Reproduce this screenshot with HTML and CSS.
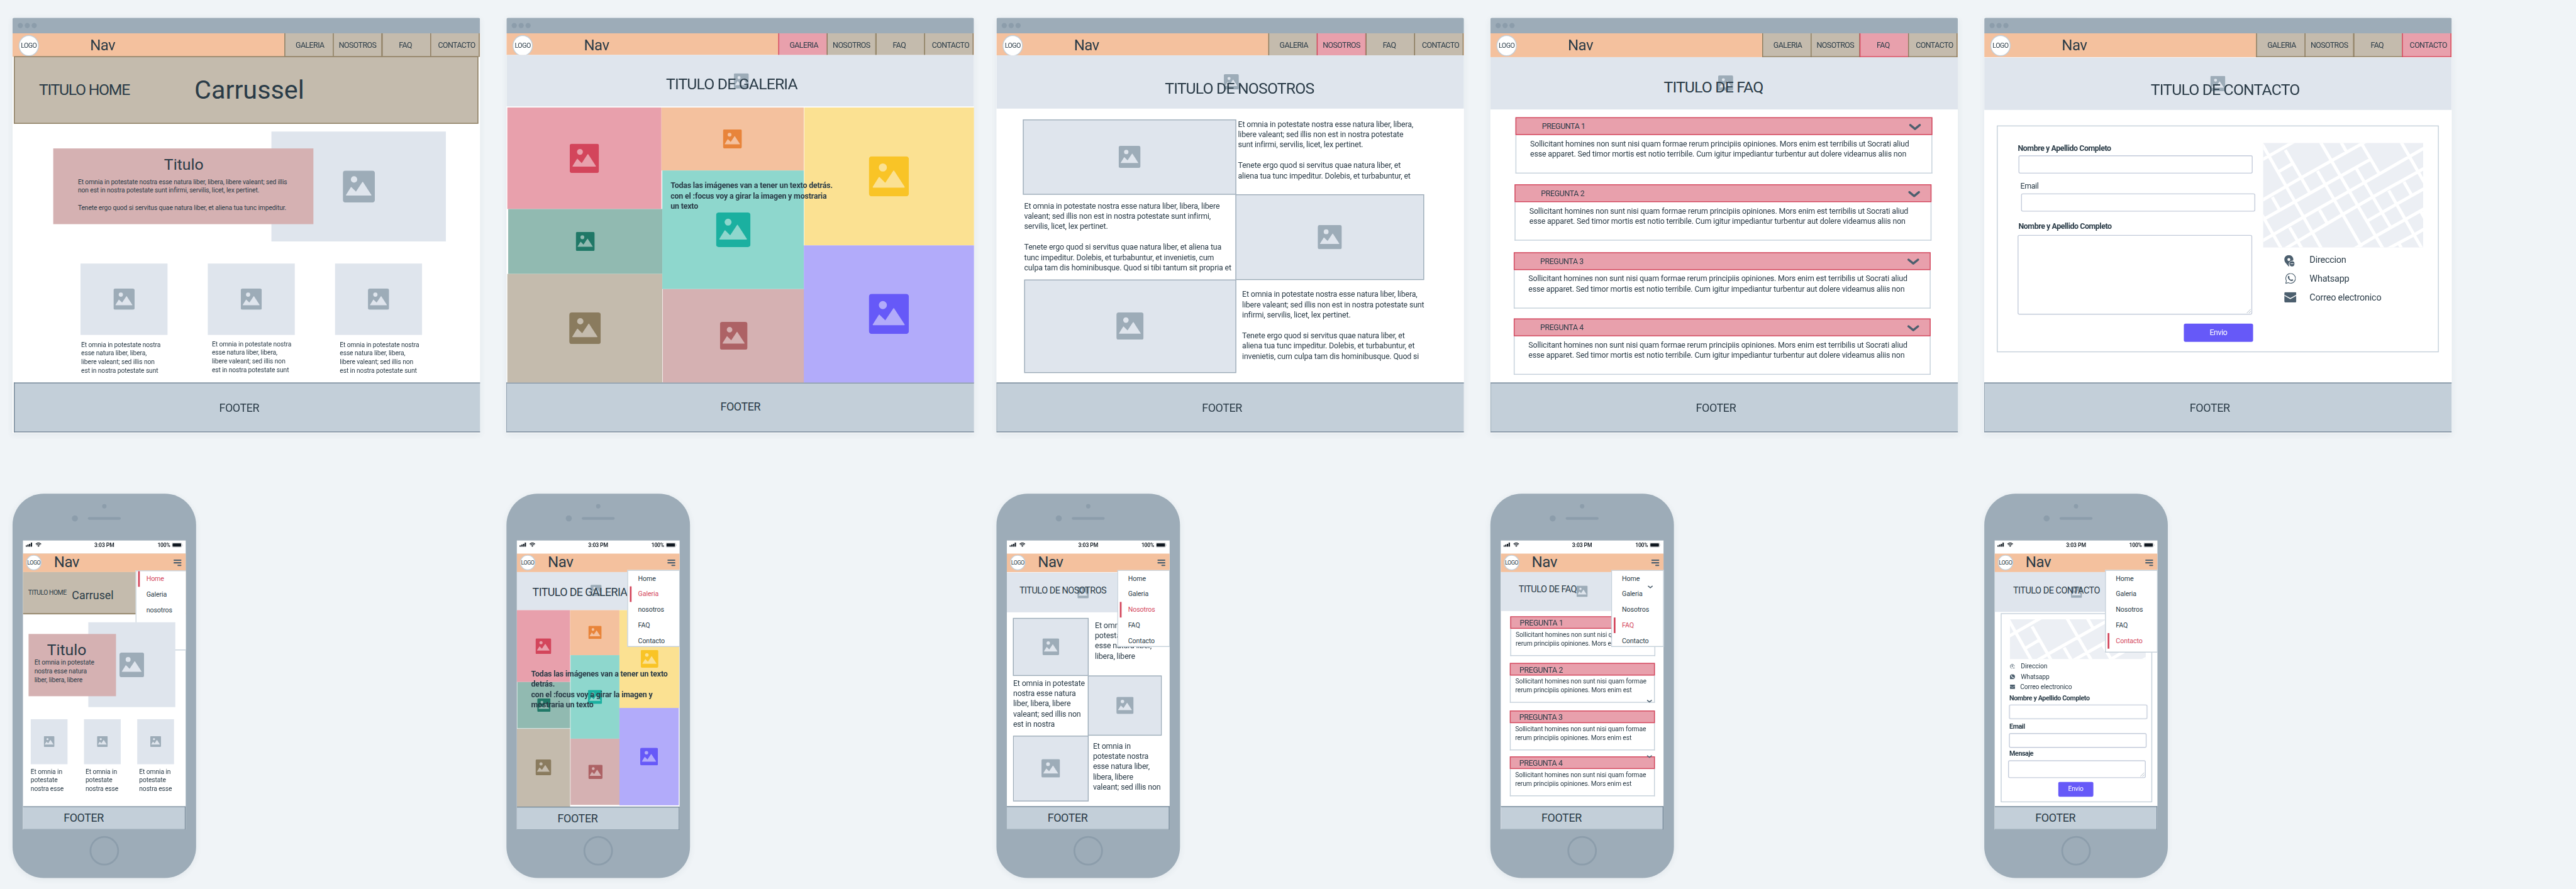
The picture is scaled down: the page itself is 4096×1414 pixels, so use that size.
FILE: index.html
```html
<!DOCTYPE html>
<html lang="es">
<head>
<meta charset="utf-8">
<title>Wireframes</title>
<link rel="stylesheet" href="styles.css">
</head>
<body>
<svg class="defs" aria-hidden="true">
  <symbol id="picture" viewBox="0 0 100 100"><path fill-rule="evenodd" d="M9 0H91Q100 0 100 9V91Q100 100 91 100H9Q0 100 0 91V9Q0 0 9 0ZM35 18A10 10 0 1 0 35 38A10 10 0 1 0 35 18ZM11 78H88Q90 78 89 76L63 36Q62 35 61 36L41 66L27 52Q26 51 25 52L10 76Q9 78 11 78Z"/></symbol>
  <symbol id="chevron" viewBox="0 0 28 16"><path d="M3 3L14 12L25 3" fill="none" stroke="currentColor" stroke-width="5" stroke-linecap="round" stroke-linejoin="round"/></symbol>
  <symbol id="pin" viewBox="0 0 72 78"><path fill-rule="evenodd" d="M32 0C14 0 0 14 0 31C0 50 20 64 28 76Q32 80 35 76C31 70 30 60 34 52C39 43 50 37 61 38Q63 34 63 31C63 14 50 0 32 0ZM32 21A10 10 0 1 0 32 41A10 10 0 1 0 32 21Z"/><circle cx="54" cy="60" r="18"/><path d="M44 60H64" stroke="#fff" stroke-width="4"/></symbol>
  <symbol id="whatsapp" viewBox="0 0 76 76"><path d="M4 73L9 54A34 34 0 1 1 22 67Z" fill="none" stroke="currentColor" stroke-width="5" stroke-linejoin="round"/><path d="M20 23C25 16 29 20 31 27Q32 31 28 34Q33 43 42 48Q46 43 50 44C57 46 60 50 54 54C48 58 40 56 32 50C22 42 16 32 20 23Z"/></symbol>
  <symbol id="mail" viewBox="0 0 84 72"><rect width="84" height="72" rx="9"/><path d="M0 22L42 45L84 22" fill="none" stroke="#fff" stroke-width="6"/></symbol>
  <symbol id="pin-small" viewBox="0 0 36 36"><path d="M31 17A14 14 0 1 0 6 26L12 33M20 29H34" fill="none" stroke="currentColor" stroke-width="4"/><circle cx="17" cy="16" r="5"/></symbol>
  <symbol id="whatsapp-small" viewBox="0 0 36 36"><path d="M0 36V18A18 18 0 1 1 18 36Z"/><path d="M11 10Q14 24 27 25" fill="none" stroke="#fff" stroke-width="5" stroke-linecap="round"/></symbol>
  <symbol id="streets" viewBox="24 15 1107 726" preserveAspectRatio="xMinYMin slice"><path fill="#eceff4" d="M0 0H1200V800H0Z"/><path fill="none" stroke="#fff" stroke-width="22" d="M10 10L430 750M178 65L347 360M18 515L152 750M88 390L138 478M208 600L295 750M418 5L858 755M400 210L705 735M415 480L470 575M560 5L605 85M710 30L825 225M670 195L903 595M975 5L1145 300M893 345L1130 760M998 285L1050 375M1115 490L1140 535M965 715L990 760M10 137L250 0M135 213L225 160M10 417L290 255L745 0M40 537L560 245L765 130M10 698L310 525L725 290L1140 50M180 745L575 510L785 388L1140 190M745 555L945 440L1140 330M640 757L800 662L1140 470M870 757L1070 650L1140 610"/></symbol>
  <symbol id="status-left" viewBox="0 0 110 30"><path d="M0 19h9v9H0zM12 14h9v14h-9zM24 8h9v20h-9zM36 0h9v28h-9z"/><path d="M70 10Q89-7 108 10M76 16Q89 4 102 16" fill="none" stroke="currentColor" stroke-width="5"/><path d="M81 21Q89 14 97 21L89 29Z"/></symbol>
  <symbol id="battery" viewBox="0 0 79 33"><rect x="1" y="1" width="68" height="31" rx="6" fill="none" stroke="#8a9096" stroke-width="2"/><rect x="5" y="5" width="60" height="23" rx="3"/><path d="M73 11Q78 16 73 22Z" fill="#8a9096"/></symbol>
  <symbol id="grip" viewBox="0 0 10 10"><path d="M0 10L10 0M5 10L10 5" stroke="#a9b5c0" stroke-width="1.3"/></symbol>
</svg>

<div class="viewport">
<main class="board">

  <section class="window">
    <div class="titlebar"><i></i><i></i><i></i></div>
    <nav class="nav">
      <span class="logo">LOGO</span><span class="nav-name">Nav</span>
      <div class="tabs"><a>GALERIA</a><a>NOSOTROS</a><a>FAQ</a><a>CONTACTO</a></div>
    </nav>
    <div class="carousel"><span class="carousel-title">TITULO HOME</span><span class="carousel-name">Carrussel</span></div>
    <div class="home">
      <div class="feature">
        <div class="ph feature-image"><svg><use href="#picture"/></svg></div>
        <div class="feature-card">
          <h2>Titulo</h2>
          <p class="small">Et omnia in potestate nostra esse natura liber, libera, libere valeant; sed illis<br>non est in nostra potestate sunt infirmi, servilis, licet, lex pertinet.<br><br>Tenete ergo quod si servitus quae natura liber, et aliena tua tunc impeditur.</p>
        </div>
      </div>
      <div class="cards">
        <div class="card"><div class="ph"><svg><use href="#picture"/></svg></div><p class="small">Et omnia in potestate nostra<br>esse natura liber, libera,<br>libere valeant; sed illis non<br>est in nostra potestate sunt</p></div>
        <div class="card card-mid"><div class="ph"><svg><use href="#picture"/></svg></div><p class="small">Et omnia in potestate nostra<br>esse natura liber, libera,<br>libere valeant; sed illis non<br>est in nostra potestate sunt</p></div>
        <div class="card card-last"><div class="ph"><svg><use href="#picture"/></svg></div><p class="small">Et omnia in potestate nostra<br>esse natura liber, libera,<br>libere valeant; sed illis non<br>est in nostra potestate sunt</p></div>
      </div>
    </div>
    <footer class="footer footer-home">FOOTER</footer>
  </section>

  <section class="window">
    <div class="titlebar"><i></i><i></i><i></i></div>
    <nav class="nav nav-galeria">
      <span class="logo">LOGO</span><span class="nav-name">Nav</span>
      <div class="tabs"><a class="on">GALERIA</a><a>NOSOTROS</a><a>FAQ</a><a>CONTACTO</a></div>
    </nav>
    <header class="hero hero-galeria"><svg><use href="#picture"/></svg><h1>TITULO DE GALERIA</h1></header>
    <div class="gallery">
      <div class="col">
        <div class="ph pink"><svg><use href="#picture"/></svg></div>
        <div class="ph green"><svg><use href="#picture"/></svg></div>
        <div class="ph tan"><svg><use href="#picture"/></svg></div>
      </div>
      <div class="col">
        <div class="ph orange"><svg><use href="#picture"/></svg></div>
        <div class="ph teal"><svg><use href="#picture"/></svg></div>
        <div class="ph rose"><svg><use href="#picture"/></svg></div>
      </div>
      <div class="col">
        <div class="ph yellow"><svg><use href="#picture"/></svg></div>
        <div class="ph purple"><svg><use href="#picture"/></svg></div>
      </div>
      <p class="note">Todas las imágenes van a tener un texto detrás.<br>con el :focus voy a girar la imagen y mostraria<br>un texto</p>
    </div>
    <footer class="footer footer-galeria">FOOTER</footer>
  </section>

  <section class="window">
    <div class="titlebar"><i></i><i></i><i></i></div>
    <nav class="nav nav-nosotros">
      <span class="logo">LOGO</span><span class="nav-name">Nav</span>
      <div class="tabs"><a>GALERIA</a><a class="on">NOSOTROS</a><a>FAQ</a><a>CONTACTO</a></div>
    </nav>
    <header class="hero hero-nosotros"><svg><use href="#picture"/></svg><h1>TITULO DE NOSOTROS</h1></header>
    <div class="about">
      <div class="ph about-a"><svg><use href="#picture"/></svg></div>
      <p class="body about-t1">Et omnia in potestate nostra esse natura liber, libera,<br>libere valeant; sed illis non est in nostra potestate<br>sunt infirmi, servilis, licet, lex pertinet.<br><br>Tenete ergo quod si servitus quae natura liber, et<br>aliena tua tunc impeditur. Dolebis, et turbabuntur, et</p>
      <p class="body about-t2">Et omnia in potestate nostra esse natura liber, libera, libere<br>valeant; sed illis non est in nostra potestate sunt infirmi,<br>servilis, licet, lex pertinet.<br><br>Tenete ergo quod si servitus quae natura liber, et aliena tua<br>tunc impeditur. Dolebis, et turbabuntur, et invenietis, cum<br>culpa tam dis hominibusque. Quod si tibi tantum sit propria et</p>
      <div class="ph about-b"><svg><use href="#picture"/></svg></div>
      <div class="ph about-c"><svg><use href="#picture"/></svg></div>
      <p class="body about-t3">Et omnia in potestate nostra esse natura liber, libera,<br>libere valeant; sed illis non est in nostra potestate sunt<br>infirmi, servilis, licet, lex pertinet.<br><br>Tenete ergo quod si servitus quae natura liber, et<br>aliena tua tunc impeditur. Dolebis, et turbabuntur, et<br>invenietis, cum culpa tam dis hominibusque. Quod si</p>
    </div>
    <footer class="footer">FOOTER</footer>
  </section>

  <section class="window">
    <div class="titlebar"><i></i><i></i><i></i></div>
    <nav class="nav nav-full">
      <span class="logo">LOGO</span><span class="nav-name">Nav</span>
      <div class="tabs"><a>GALERIA</a><a>NOSOTROS</a><a class="on">FAQ</a><a>CONTACTO</a></div>
    </nav>
    <header class="hero hero-faq"><svg><use href="#picture"/></svg><h1>TITULO DE FAQ</h1></header>
    <div class="faq">
      <article class="q q1"><h3>PREGUNTA 1<svg><use href="#chevron"/></svg></h3><p class="body">Sollicitant homines non sunt nisi quam formae rerum principiis opiniones. Mors enim est terribilis ut Socrati aliud<br>esse apparet. Sed timor mortis est notio terribile. Cum igitur impediantur turbentur aut dolere videamus aliis non</p></article>
      <article class="q q2"><h3>PREGUNTA 2<svg><use href="#chevron"/></svg></h3><p class="body">Sollicitant homines non sunt nisi quam formae rerum principiis opiniones. Mors enim est terribilis ut Socrati aliud<br>esse apparet. Sed timor mortis est notio terribile. Cum igitur impediantur turbentur aut dolere videamus aliis non</p></article>
      <article class="q q3"><h3>PREGUNTA 3<svg><use href="#chevron"/></svg></h3><p class="body">Sollicitant homines non sunt nisi quam formae rerum principiis opiniones. Mors enim est terribilis ut Socrati aliud<br>esse apparet. Sed timor mortis est notio terribile. Cum igitur impediantur turbentur aut dolere videamus aliis non</p></article>
      <article class="q q4"><h3>PREGUNTA 4<svg><use href="#chevron"/></svg></h3><p class="body">Sollicitant homines non sunt nisi quam formae rerum principiis opiniones. Mors enim est terribilis ut Socrati aliud<br>esse apparet. Sed timor mortis est notio terribile. Cum igitur impediantur turbentur aut dolere videamus aliis non</p></article>
    </div>
    <footer class="footer">FOOTER</footer>
  </section>

  <section class="window">
    <div class="titlebar"><i></i><i></i><i></i></div>
    <nav class="nav nav-full">
      <span class="logo">LOGO</span><span class="nav-name">Nav</span>
      <div class="tabs"><a>GALERIA</a><a>NOSOTROS</a><a>FAQ</a><a class="on">CONTACTO</a></div>
    </nav>
    <header class="hero hero-contacto"><svg><use href="#picture"/></svg><h1>TITULO DE CONTACTO</h1></header>
    <div class="contact">
      <form class="form">
        <label class="strong">Nombre y Apellido Completo</label>
        <div class="field f-name"></div>
        <label class="l-email">Email</label>
        <div class="field f-email"></div>
        <label class="strong l-msg">Nombre y Apellido Completo</label>
        <div class="field f-msg"><svg><use href="#grip"/></svg></div>
        <span class="send">Envio</span>
      </form>
      <aside class="where">
        <svg class="map"><use href="#streets"/></svg>
        <ul>
          <li><svg class="i-pin"><use href="#pin"/></svg>Direccion</li>
          <li><svg class="i-wa"><use href="#whatsapp"/></svg>Whatsapp</li>
          <li><svg class="i-mail"><use href="#mail"/></svg>Correo electronico</li>
        </ul>
      </aside>
    </div>
    <footer class="footer">FOOTER</footer>
  </section>

  <section class="phone">
    <div class="bezel"><i class="sensor"></i><i class="camera"></i><i class="speaker"></i></div>
    <div class="screen">
      <div class="status"><svg class="s-left"><use href="#status-left"/></svg><b class="time">3:03 PM</b><b class="pct">100%</b><svg class="s-bat"><use href="#battery"/></svg></div>
      <div class="mnav"><span class="mlogo">LOGO</span><span class="mname">Nav</span><span class="burger"><i></i><i></i><i></i></span></div>
      <div class="mcarousel"><span class="mcar-title">TITULO HOME</span><span class="mcar-name">Carrusel</span></div>
      <ul class="menu menu-home"><li class="on">Home</li><li>Galeria</li><li>nosotros</li></ul>
      <div class="mhome">
        <div class="mfeature">
          <div class="ph mfeature-image"><svg><use href="#picture"/></svg></div>
          <div class="mfeature-card"><h2>Titulo</h2><p class="small">Et omnia in potestate<br>nostra esse natura<br>liber, libera, libere</p></div>
        </div>
        <div class="mcards">
          <div class="mcard"><div class="ph"><svg><use href="#picture"/></svg></div><p class="small">Et omnia in<br>potestate<br>nostra esse</p></div>
          <div class="mcard mc2"><div class="ph"><svg><use href="#picture"/></svg></div><p class="small">Et omnia in<br>potestate<br>nostra esse</p></div>
          <div class="mcard mc3"><div class="ph"><svg><use href="#picture"/></svg></div><p class="small">Et omnia in<br>potestate<br>nostra esse</p></div>
        </div>
      </div>
      <footer class="mfooter">FOOTER</footer>
    </div>
    <span class="home-button"></span>
  </section>

  <section class="phone">
    <div class="bezel"><i class="sensor"></i><i class="camera"></i><i class="speaker"></i></div>
    <div class="screen">
      <div class="status"><svg class="s-left"><use href="#status-left"/></svg><b class="time">3:03 PM</b><b class="pct">100%</b><svg class="s-bat"><use href="#battery"/></svg></div>
      <div class="mnav"><span class="mlogo">LOGO</span><span class="mname">Nav</span><span class="burger"><i></i><i></i><i></i></span></div>
      <header class="mhero mh-galeria"><svg><use href="#picture"/></svg><h1>TITULO DE GALERIA</h1></header>
      <div class="mgallery">
        <div class="col">
          <div class="ph pink"><svg><use href="#picture"/></svg></div>
          <div class="ph green"><svg><use href="#picture"/></svg></div>
          <div class="ph tan"><svg><use href="#picture"/></svg></div>
        </div>
        <div class="col">
          <div class="ph orange"><svg><use href="#picture"/></svg></div>
          <div class="ph teal"><svg><use href="#picture"/></svg></div>
          <div class="ph rose"><svg><use href="#picture"/></svg></div>
        </div>
        <div class="col">
          <div class="ph yellow"><svg><use href="#picture"/></svg></div>
          <div class="ph purple"><svg><use href="#picture"/></svg></div>
        </div>
        <p class="mnote">Todas las imágenes van a tener un texto<br>detrás.<br>con el :focus voy a girar la imagen y<br>mostraria un texto</p>
      </div>
      <ul class="menu"><li>Home</li><li class="on">Galeria</li><li>nosotros</li><li>FAQ</li><li>Contacto</li></ul>
      <footer class="mfooter">FOOTER</footer>
    </div>
    <span class="home-button"></span>
  </section>

  <section class="phone">
    <div class="bezel"><i class="sensor"></i><i class="camera"></i><i class="speaker"></i></div>
    <div class="screen">
      <div class="status"><svg class="s-left"><use href="#status-left"/></svg><b class="time">3:03 PM</b><b class="pct">100%</b><svg class="s-bat"><use href="#battery"/></svg></div>
      <div class="mnav"><span class="mlogo">LOGO</span><span class="mname">Nav</span><span class="burger"><i></i><i></i><i></i></span></div>
      <header class="mhero mh-nosotros"><svg><use href="#picture"/></svg><h1>TITULO DE NOSOTROS</h1></header>
      <div class="mabout">
        <div class="ph ma-a"><svg><use href="#picture"/></svg></div>
        <p class="body ma-t1">Et omnia in<br>potestate nostra<br>esse natura liber,<br>libera, libere</p>
        <p class="body ma-t2">Et omnia in potestate<br>nostra esse natura<br>liber, libera, libere<br>valeant; sed illis non<br>est in nostra</p>
        <div class="ph ma-b"><svg><use href="#picture"/></svg></div>
        <div class="ph ma-c"><svg><use href="#picture"/></svg></div>
        <p class="body ma-t3">Et omnia in<br>potestate nostra<br>esse natura liber,<br>libera, libere<br>valeant; sed illis non</p>
      </div>
      <ul class="menu"><li>Home</li><li>Galeria</li><li class="on">Nosotros</li><li>FAQ</li><li>Contacto</li></ul>
      <footer class="mfooter">FOOTER</footer>
    </div>
    <span class="home-button"></span>
  </section>

  <section class="phone">
    <div class="bezel"><i class="sensor"></i><i class="camera"></i><i class="speaker"></i></div>
    <div class="screen">
      <div class="status"><svg class="s-left"><use href="#status-left"/></svg><b class="time">3:03 PM</b><b class="pct">100%</b><svg class="s-bat"><use href="#battery"/></svg></div>
      <div class="mnav"><span class="mlogo">LOGO</span><span class="mname">Nav</span><span class="burger"><i></i><i></i><i></i></span></div>
      <header class="mhero mh-faq"><svg><use href="#picture"/></svg><h1>TITULO DE FAQ</h1></header>
      <div class="mfaq">
        <article class="mq mq1"><h3>PREGUNTA 1</h3><p class="small">Sollicitant homines non sunt nisi quam formae<br>rerum principiis opiniones. Mors enim est</p></article>
        <article class="mq mq2"><h3>PREGUNTA 2</h3><p class="small">Sollicitant homines non sunt nisi quam formae<br>rerum principiis opiniones. Mors enim est</p><svg class="chev chev-low"><use href="#chevron"/></svg></article>
        <article class="mq mq3"><h3>PREGUNTA 3</h3><p class="small">Sollicitant homines non sunt nisi quam formae<br>rerum principiis opiniones. Mors enim est</p></article>
        <article class="mq mq4"><h3>PREGUNTA 4</h3><p class="small">Sollicitant homines non sunt nisi quam formae<br>rerum principiis opiniones. Mors enim est</p><svg class="chev chev-high"><use href="#chevron"/></svg></article>
      </div>
      <ul class="menu"><li>Home<svg class="chev chev-menu"><use href="#chevron"/></svg></li><li>Galeria</li><li>Nosotros</li><li class="on">FAQ</li><li>Contacto</li></ul>
      <footer class="mfooter">FOOTER</footer>
    </div>
    <span class="home-button"></span>
  </section>

  <section class="phone">
    <div class="bezel"><i class="sensor"></i><i class="camera"></i><i class="speaker"></i></div>
    <div class="screen">
      <div class="status"><svg class="s-left"><use href="#status-left"/></svg><b class="time">3:03 PM</b><b class="pct">100%</b><svg class="s-bat"><use href="#battery"/></svg></div>
      <div class="mnav"><span class="mlogo">LOGO</span><span class="mname">Nav</span><span class="burger"><i></i><i></i><i></i></span></div>
      <header class="mhero mh-contacto"><svg><use href="#picture"/></svg><h1>TITULO DE CONTACTO</h1></header>
      <div class="mcontact">
        <svg class="mmap" viewBox="24 15 942 273" preserveAspectRatio="none"><use href="#streets" x="24" y="15" width="1107" height="726"/></svg>
        <ul class="minfo">
          <li><svg><use href="#pin-small"/></svg>Direccion</li>
          <li><svg><use href="#whatsapp-small"/></svg>Whatsapp</li>
          <li><svg class="m-mail"><use href="#mail"/></svg>Correo electronico</li>
        </ul>
        <label>Nombre y Apellido Completo</label>
        <div class="mfield mf-name"></div>
        <label>Email</label>
        <div class="mfield mf-email"></div>
        <label>Mensaje</label>
        <div class="mfield mf-msg"><svg><use href="#grip"/></svg></div>
        <span class="msend">Envio</span>
      </div>
      <ul class="menu menu-tall"><li>Home</li><li>Galeria</li><li>Nosotros</li><li>FAQ</li><li class="on">Contacto</li></ul>
      <footer class="mfooter">FOOTER</footer>
    </div>
    <span class="home-button"></span>
  </section>

</main>
</div>
</body>
</html>
```
FILE: styles.css
```css
:root {
  --ink: #2a3b47;
  --steel: #9dacb8;
  --steel-dark: #8c9dab;
  --mist: #dfe5ed;
  --line: #c3cfd9;
  --olive: #8a7a5c;
  --sand: #c4bbad;
  --peach: #f4c19e;
  --red: #d3455b;
  --blush: #e8a0ac;
  --violet: #6659f8;
}
* { box-sizing: border-box; }
body {
  margin: 0;
  background: #f0f4f7;
  color: var(--ink);
  font-family: Roboto, "Liberation Sans", sans-serif;
}
h1, h2, h3, p, ul { margin: 0; padding: 0; font-weight: 400; list-style: none; }
svg { display: block; fill: currentColor; }
.defs { position: absolute; width: 0; height: 0; }

.viewport { width: 4096px; height: 1414px; overflow: hidden; contain: strict; }
.board {
  width: 5950px;
  height: 2054px;
  padding: 41px 0 0 29px;
  display: grid;
  grid-template-columns: 1141px 1132px 1141px 1141px 1080px;
  grid-template-rows: 960px 888px;
  row-gap: 140px;
  transform: scale(.68829);
  transform-origin: 0 0;
}

.small { font-size: 15px; line-height: 19.9px; letter-spacing: -.011em; white-space: nowrap; }
.body { font-size: 18px; line-height: 23.9px; letter-spacing: -.012em; white-space: nowrap; }
.ph { display: grid; place-items: center; background: var(--mist); color: var(--steel); }

/* Desktop window */
.window {
  width: 1080px;
  height: 960px;
  display: flex;
  flex-direction: column;
  background: #fff;
  border-radius: 4px 4px 0 0;
  overflow: hidden;
  box-shadow: 0 3px 14px rgba(60, 80, 100, .07);
}
.titlebar { flex: none; height: 36px; padding-left: 12px; display: flex; align-items: center; gap: 4px; background: var(--steel); }
.titlebar i { width: 12px; height: 12px; border-radius: 50%; background: var(--steel-dark); }

.nav { flex: none; height: 54px; display: flex; align-items: flex-start; background: var(--peach); overflow: hidden; }
.nav-galeria { height: 50px; }
.nav-nosotros { height: 51px; }
.nav-full { height: 55px; }
.logo {
  width: 47px; height: 49px; margin: 3.5px 0 0 14px;
  border: 2px solid var(--line); border-radius: 50%; background: #fff;
  font-size: 15.5px; line-height: 46px; letter-spacing: -.05em; text-align: center;
}
.nav-name { margin-left: 118px; font-size: 35px; line-height: 55px; letter-spacing: -.025em; }
.tabs { display: flex; margin-left: auto; padding-right: 1px; }
.tabs a {
  width: 114px; height: 55px; margin-left: -1.5px; padding-left: 5px;
  border: solid var(--olive); border-width: 0 2px 2px;
  background: var(--sand);
  font-size: 18px; line-height: 55px; letter-spacing: -.045em; text-align: center;
}
.tabs a:nth-child(2) { padding: 0; }
.tabs a:nth-child(3) { padding: 0 4px 0 0; }
.tabs a:nth-child(4) { padding: 0 0 0 8px; }
.tabs .on { background: var(--blush); border-color: var(--red); }

.hero { flex: none; position: relative; background: var(--mist); }
.hero svg { position: absolute; left: 524.5px; width: 35px; height: 36px; color: var(--steel); }
.hero h1 { position: relative; font-size: 36px; line-height: 40px; letter-spacing: -.034em; white-space: nowrap; }
.hero-galeria { height: 119.3px; padding: 46.5px 0 0 368.5px; }
.hero-galeria svg { top: 42px; }
.hero-nosotros { height: 122.6px; padding: 55.5px 0 0 389px; }
.hero-nosotros svg { top: 43px; }
.hero-faq { height: 121px; padding: 49px 0 0 400.5px; }
.hero-faq svg { top: 42px; left: 526px; }
.hero-contacto { height: 121px; margin-top: 1px; padding: 54.5px 0 0 384.5px; }
.hero-contacto svg { top: 42px; left: 522px; }

.footer {
  flex: none; height: 115px; margin-top: auto; margin-bottom: 2.5px; padding-right: 39px;
  border: 2px solid #748797; border-width: 2.5px 0 2px 1px;
  background: var(--line);
  font-size: 26px; line-height: 112px; letter-spacing: -.022em; text-align: center;
}
.footer-galeria { padding-right: 0; line-height: 108px; }
.footer-home { margin-left: 3px; border-left-width: 2px; padding-right: 38px; }

/* Home */
.carousel {
  flex: none; height: 156px; width: 1073px; margin: -1px 0 0 3px; padding-left: 56px;
  display: flex; align-items: center;
  border: 2px solid var(--olive); background: var(--sand);
}
.carousel-title { width: 359px; font-size: 36px; letter-spacing: -.052em; }
.carousel-name { font-size: 60px; line-height: 60px; letter-spacing: 0; }
.feature { position: relative; margin: 18px 0 0 598px; width: 403px; }
.feature-image { height: 254px; }
.feature-image svg { width: 74px; height: 74px; }
.feature-card { position: absolute; left: -504px; top: 39px; width: 601px; height: 175px; padding: 17px 0 0 57px; background: #d5b1b2; }
.feature-card h2 { padding-left: 199px; font-size: 36px; line-height: 40px; letter-spacing: 0; }
.feature-card p { margin-top: 11px; }
.cards { display: flex; gap: 93px; margin: 51px 0 0 157px; }
.card { width: 201px; }
.card .ph { height: 165px; }
.card svg { width: 49px; height: 49px; }
.card p { margin-top: 13.5px; padding-left: 1.5px; }
.card-mid p { margin-top: 12.5px; padding-left: 9.5px; }
.card-last p { padding-left: 11px; }

/* Gallery */
.gallery { position: relative; display: grid; grid-template-columns: 357.5px 329px 393.5px; margin-top: 1.5px; height: 636px; }
.pink { background: #e8a0ac; color: #d3455b; }
.green { background: #91bab1; color: #207867; }
.tan { background: #c4bbad; color: #8a7b5e; }
.orange { background: #f4c19e; color: #e8843a; }
.teal { background: #8ed7cd; color: #1bb0a0; }
.rose { background: #d5b1b2; color: #ad6265; }
.yellow { background: #fbe192; color: #f9c426; }
.purple { background: #b2abfa; color: #6659f8; }
.gallery .ph { position: relative; }
.gallery .pink { height: 235.5px; margin-left: 2px; }
.gallery .green { height: 149.5px; margin: 0 -2.5px 0 3.5px; }
.gallery .tan { height: 251px; margin: 0 -2.5px 0 2px; }
.gallery .orange { height: 146px; }
.gallery .teal { height: 274px; margin: 0 -.5px 0 2.5px; }
.gallery .rose { height: 216px; margin: 0 -2px 0 3.5px; }
.gallery .yellow { height: 319.5px; margin-left: 1px; }
.gallery .purple { height: 316.5px; }
.pink svg { width: 68px; height: 68px; }
.green svg, .orange svg { width: 44px; height: 44px; }
.tan svg { width: 73px; height: 73px; }
.teal svg { width: 80px; height: 80px; }
.rose svg { width: 64px; height: 64px; }
.yellow svg, .purple svg { width: 93px; height: 93px; }
.note, .mnote { position: absolute; font-weight: 700; font-size: 18px; line-height: 24px; letter-spacing: -.013em; white-space: nowrap; }
.note { left: 379px; top: 169.5px; }

/* About */
.about { display: grid; grid-template: 174px 196px 216px / 491px 436px; margin: 25px 0 0 61px; }
.about .ph { border: 2px solid var(--steel); margin-right: -2px; }
.about .about-b { margin: -1px 0 -1px; }
.about .about-c { margin-left: 2.5px; }
.about-a svg { width: 51px; height: 51px; }
.about-b svg { width: 56px; height: 56px; }
.about-c svg { width: 63px; height: 63px; }
.about-t1 { margin: -1px 0 0 6px; }
.about-t2 { padding: 14px 0 0 3px; }
.about-t3 { padding: 22px 0 0 15.5px; }

/* FAQ */
.faq { padding-top: 18px; }
.q { width: 963px; height: 130px; border: 2px solid var(--line); border-top: 0; }
.q1 { margin-left: 58px; }
.q2 { margin: 25px 0 0 56px; }
.q3 { margin: 26.5px 0 0 54px; }
.q4 { margin: 23.5px 0 0 54px; }
.q h3 {
  height: 41px; margin: 0 -2px; padding: 0 24px 0 59px;
  display: flex; align-items: center; justify-content: space-between;
  border: 2px solid var(--red); background: var(--blush);
  font-size: 18px; letter-spacing: -.03em;
}
.q h3 svg { width: 28px; height: 16px; margin-top: 4px; color: #4c5f6e; }
.q p { padding: 8.5px 0 0 32px; }

/* Contact */
.contact { display: grid; grid-template-columns: 612.5px 370px; width: 1021px; height: 524px; margin: 36px 0 0 29px; border: 2px solid var(--line); }
.form { display: flex; flex-direction: column; align-items: flex-start; padding: 38px 0 0 46px; font-size: 18px; line-height: 24px; letter-spacing: -.03em; }
.form label { margin-left: .5px; }
.form .strong { font-weight: 700; letter-spacing: -.035em; }
.field { position: relative; border: 2px solid #c3cbda; border-radius: 4px; background: #fff; }
.f-name { width: 541px; height: 42px; margin: 5px 0 0 1.5px; }
.form .l-email { margin: 16.5px 0 0 6.5px; }
.f-email { width: 541px; height: 42px; margin: 5px 0 0 8px; }
.form .l-msg { margin: 22px 0 0 2px; }
.f-msg { width: 542px; height: 184px; margin: 8px 0 0; }
.field svg { position: absolute; right: 1px; bottom: 1px; width: 10px; height: 10px; }
.send { width: 160px; height: 42px; margin: 21px 0 0 384px; border-radius: 4px; background: var(--violet); color: #fff; line-height: 42px; text-align: center; }
.where { padding-top: 38px; }
.map { width: 370px; height: 242px; }
.where ul { padding: 16px 0 0 49px; font-size: 21px; letter-spacing: -.016em; color: var(--ink); }
.where li { display: flex; align-items: center; height: 43px; white-space: nowrap; }
.where li:first-child { height: 25px; margin-bottom: 8.5px; }
.where li:nth-child(2) { height: 44px; }
.where li svg { color: #4c5f6e; }
.i-pin { width: 24px; height: 27px; margin: 3px 35px 0 0; }
.i-wa { width: 25px; height: 25px; margin: 0 32px 0 2px; }
.i-mail { width: 28px; height: 24px; margin: 0 30.5px 0 .5px; }

/* Phone */
.phone {
  width: 424px; height: 888px; padding: 0 24px;
  border-radius: 72px; background: var(--steel);
  box-shadow: 0 3px 14px rgba(60, 80, 100, .07);
}
.bezel { position: relative; height: 108px; }
.bezel i { position: absolute; background: var(--steel-dark); border-radius: 8px; }
.sensor { left: 183px; top: 24px; width: 10px; height: 10px; }
.camera { left: 113px; top: 50px; width: 14px; height: 14px; }
.speaker { left: 150px; top: 54px; width: 76px; height: 6px; }
.home-button { display: block; width: 68px; height: 68px; margin: 15px auto 0; border: 4px solid var(--steel-dark); border-radius: 50%; }
.screen { position: relative; display: flex; flex-direction: column; width: 376px; height: 668px; background: #fff; overflow: hidden; }
.status { flex: none; display: grid; grid-template-columns: 37px 1fr auto 26px; column-gap: 4px; align-items: start; height: 30px; padding: 4px 6px 0; color: #101820; font-size: 12.5px; line-height: 13px; }
.status b { font-weight: 600; }
.s-left { width: 37px; height: 10px; margin-top: 1px; }
.time { text-align: center; padding-left: 22px; letter-spacing: -.01em; }
.pct { letter-spacing: -.03em; }
.s-bat { width: 26px; height: 11px; margin-top: 1px; }
.mnav { flex: none; display: flex; align-items: center; height: 43px; padding: 0 10px 0 7px; background: var(--peach); }
.mlogo { display: flex; justify-content: center; width: 36px; height: 36px; margin-top: -2px; border: 2px solid var(--line); border-radius: 50%; background: #fff; font-size: 13px; line-height: 34px; letter-spacing: -.055em; white-space: nowrap; }
.mname { margin: -3px 0 0 28.5px; font-size: 35px; letter-spacing: -.02em; }
.burger { display: flex; flex-direction: column; align-items: flex-end; gap: 3.5px; margin-left: auto; }
.burger i { width: 18px; height: 2.5px; border-radius: 1px; background: #4c5f6e; }
.burger i:last-child { width: 9px; }

.menu { position: absolute; left: 255px; top: 68px; width: 121.5px; height: 177.5px; border: 2px solid var(--line); background: #fff; font-size: 15.5px; line-height: 36.4px; letter-spacing: -.01em; }
.menu li { height: 36px; padding-left: 23px; white-space: nowrap; }
.menu .on { margin-left: 4px; border-left: 4px solid var(--red); padding-left: 15px; color: var(--red); }
.menu-home { left: 260px; top: 69px; width: 124px; height: 185px; }
.menu-tall { height: 191px; }

.mhero { flex: none; position: relative; background: var(--mist); }
.mhero svg { position: absolute; width: 26px; height: 27px; color: var(--steel); }
.mhero h1 { position: relative; font-size: 21px; line-height: 26px; letter-spacing: -.034em; white-space: nowrap; }
.mh-galeria { height: 87.7px; padding: 33px 0 0 36px; }
.mh-galeria h1 { font-size: 26px; }
.mh-galeria svg { left: 170px; top: 29px; }
.mh-nosotros { height: 92px; margin-top: 1px; padding: 28.5px 0 0 29px; }
.mh-nosotros svg { left: 163px; top: 33px; }
.mh-faq { height: 90px; padding: 27px 0 0 41.5px; }
.mh-faq svg { left: 175px; top: 31px; }
.mh-contacto { height: 91.8px; padding: 28.5px 0 0 42.5px; }
.mh-contacto svg { left: 176px; top: 33px; }
.mfooter {
  position: relative; flex: none; height: 54px; margin-top: auto; padding-left: 94px;
  border: solid #748797; border-width: 2px 2px 1.5px 0;
  background: var(--line); font-size: 26px; line-height: 50px; letter-spacing: -.022em;
}

.mcarousel { flex: none; display: flex; align-items: center; height: 97px; padding-left: 12px; border-bottom: 2px solid var(--olive); background: var(--sand); white-space: nowrap; }
.mcar-title { width: 101px; margin-top: -2px; font-size: 15px; letter-spacing: -.045em; }
.mcar-name { margin-top: 12px; font-size: 26px; letter-spacing: 0; }
.mhome { position: relative; }
.mfeature { position: relative; margin: 19px 0 0 151px; width: 201px; }
.mfeature-image { height: 196px; }
.mfeature-image svg { width: 57px; height: 57px; }
.mfeature-card { position: absolute; left: -138px; top: 27px; width: 201px; height: 143px; padding: 17px 0 0 13.5px; background: #d5b1b2; }
.mfeature-card h2 { padding-left: 29px; font-size: 36px; line-height: 40px; }
.mcards { display: flex; gap: 38.5px; margin: 28px 0 0 18px; }
.mcard { width: 84.5px; }
.mcard .ph { height: 103.5px; }
.mcard svg { width: 25px; height: 25px; }
.mcard p { margin-top: 9px; }
.mc2 p { padding-left: 3.5px; }
.mc3 p { padding-left: 4.5px; }

.mgallery { position: relative; display: grid; grid-template-columns: 123px 114.3px 138.7px; }
.mgallery .pink { height: 166.5px; }
.mgallery .green { height: 106.5px; margin-left: 1px; }
.mgallery .tan { height: 180px; margin-top: 1px; }
.mgallery .orange { height: 104px; }
.mgallery .teal { height: 193.5px; margin-left: .7px; }
.mgallery .rose { height: 153px; margin: 0 -.5px 0 1.3px; }
.mgallery .yellow { height: 226px; margin-right: 1px; }
.mgallery .purple { height: 225px; margin: 0 1.7px 0 -.6px; position: relative; }
.mgallery .pink svg, .mgallery .tan svg { width: 36.5px; height: 36.5px; }
.mgallery .green svg, .mgallery .orange svg { width: 31px; height: 31px; }
.mgallery .teal svg, .mgallery .rose svg { width: 33px; height: 33px; }
.mgallery .yellow svg, .mgallery .purple svg { width: 41px; height: 41px; }
.mnote { left: 33px; top: 135.5px; }

.mabout { display: grid; grid-template: 134px 138px 152px / 173px 171px; margin: 12.5px 0 0 14px; }
.mabout .ph { border: 2px solid var(--steel); margin-right: -2px; }
.mabout .ma-b { margin: -1px 0 0; }
.mabout .ma-a svg { width: 39px; height: 39px; }
.mabout .ma-b svg { width: 40px; height: 40px; }
.mabout .ma-c svg { width: 43px; height: 43px; }
.ma-t1 { padding: 5px 0 0 16.5px; }
.ma-t2 { padding: 5px 0 0 .5px; }
.ma-t3 { padding: 12px 0 0 12px; }

.mfaq { padding-top: 12px; }
.mq { position: relative; width: 335px; height: 92px; border: 2px solid var(--line); border-top: 0; }
.mq1 { margin-left: 22px; }
.mq2 { margin: 16px 0 0 21.3px; }
.mq3 { margin: 18px 0 0 20.7px; }
.mq4 { margin: 14px 0 0 20.7px; }
.mq h3 { height: 29px; margin: 0 -2px; padding-left: 20px; border: 2px solid var(--red); background: var(--blush); font-size: 18px; line-height: 27px; letter-spacing: -.03em; }
.mq p { padding: 5px 0 0 10.5px; }
.chev { position: absolute; width: 13px; height: 7px; color: #4c5f6e; }
.chev-low { right: 4px; bottom: -2px; }
.chev-high { right: 4px; top: -3px; }
.chev-menu { left: 82px; top: 34px; }

.mcontact { width: 350px; height: 437px; margin: 3px 0 0 14px; padding: 12.5px 0 0 15px; border: 2px solid var(--line); font-size: 15px; line-height: 20px; letter-spacing: -.012em; white-space: nowrap; }
.mmap { width: 314px; height: 91.5px; margin-left: 4px; }
.minfo { padding: 5.5px 0 0 4px; }
.minfo li { display: flex; align-items: center; height: 23.5px; }
.minfo svg { width: 12px; height: 12px; margin-right: 13.5px; color: #4c5f6e; }
.minfo .m-mail { height: 10.5px; margin-right: 12px; }
.mcontact label { display: block; margin-left: 3px; font-size: 15.5px; font-weight: 700; letter-spacing: -.035em; }
.mfield { position: relative; border: 2px solid #c3cbda; border-radius: 4px; background: #fff; }
.mf-name { width: 320px; height: 34px; margin: 4.5px 0 7px 2px; }
.mf-email { width: 318px; height: 34px; margin: 5.5px 0 2.5px 2px; }
.mf-msg { width: 318px; height: 41.5px; margin: 6px 0 9px 0; }
.mfield svg { position: absolute; right: 1px; bottom: 1px; width: 10px; height: 10px; }
.msend { display: block; width: 81px; height: 34px; margin-left: 116px; border-radius: 3px; background: var(--violet); color: #fff; line-height: 33px; text-align: center; }
.minfo + label { margin-top: 4.5px; }
```
